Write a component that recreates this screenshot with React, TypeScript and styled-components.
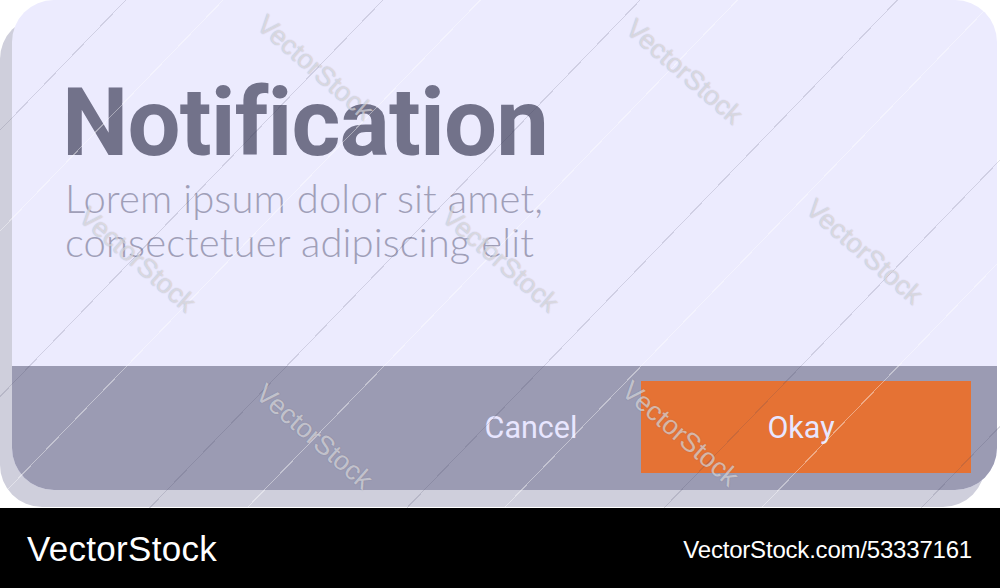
import styled, { createGlobalStyle } from "styled-components";

const GlobalStyle = createGlobalStyle`
    html, body {
        margin: 0;
        padding: 0;
        background: #ffffff;
        overflow: hidden;
    }
    * {
        box-sizing: border-box;
    }
`;

const Page = styled.div`
    width: 1000px;
    height: 588px;
    display: flex;
    flex-direction: column;
    font-family: Roboto, "Liberation Sans", sans-serif;
`;

const Stage = styled.section`
    position: relative;
    height: 508px;
    padding: 0 3px 0 12px;
    background: #ffffff;
    overflow: hidden;
`;

const Card = styled.div`
    height: 490px;
    display: flex;
    flex-direction: column;
    border-radius: 42px;
    overflow: hidden;
    background: #ecebfe;
    box-shadow: -12px 17px 0 #cfcfdc;
`;

const Body = styled.div`
    flex: 1;
    padding: 76px 0 0 50px;
`;

const Title = styled.h1`
    margin: 0 0 6px;
    font-family: Roboto, "Liberation Sans", sans-serif;
    font-weight: 700;
    font-size: 94px;
    line-height: 94px;
    letter-spacing: -0.85px;
    color: #72728a;
`;

const Message = styled.p`
    margin: 0 0 0 3px;
    font-family: Lato, "Open Sans", sans-serif;
    font-weight: 300;
    font-size: 40px;
    line-height: 44px;
    letter-spacing: 0.1px;
    color: #a09fb8;
`;

const Footer = styled.div`
    height: 124px;
    display: flex;
    align-items: stretch;
    justify-content: flex-end;
    padding: 15px 26px 17px 0;
    background: #9b9bb3;
`;

const ActionButton = styled.button<{ $primary?: boolean }>`
    border: none;
    margin: 0;
    padding: ${(p) => (p.$primary ? "0 10px 0 0" : "0")};
    font-family: Roboto, "Liberation Sans", sans-serif;
    font-weight: 400;
    font-size: 30.5px;
    color: #e8e6ff;
    cursor: pointer;
    width: ${(p) => (p.$primary ? "330px" : "220px")};
    background: ${(p) => (p.$primary ? "#e57234" : "transparent")};
`;

const Watermarks = styled.div`
    position: absolute;
    inset: 0;
    pointer-events: none;
    background-image:
        repeating-linear-gradient(
            134deg,
            transparent 0px,
            transparent 90px,
            rgba(60, 60, 90, 0.16) 90px,
            rgba(60, 60, 90, 0.16) 91px,
            transparent 91px,
            transparent 160px,
            rgba(255, 255, 255, 0.4) 160px,
            rgba(255, 255, 255, 0.4) 161px,
            transparent 161px,
            transparent 185px
        );
`;

const MarkText = styled.span`
    position: absolute;
    font-family: "Liberation Sans", Arial, sans-serif;
    font-size: 27px;
    color: rgba(255, 255, 255, 0.55);
    text-shadow: 0 0 1px rgba(80, 80, 100, 0.45);
    transform: translate(-50%, -50%) rotate(41deg);
    white-space: nowrap;
`;

const BottomBar = styled.footer`
    height: 80px;
    background: #000000;
    display: flex;
    align-items: center;
    justify-content: space-between;
    padding: 0 28px 0 27px;
    color: #ffffff;
    font-family: "Liberation Sans", Arial, sans-serif;
`;

const Brand = styled.span`
    font-size: 35px;
    letter-spacing: 0.3px;
    margin-top: 2px;
`;

const ImageId = styled.span`
    font-size: 24px;
    letter-spacing: -0.2px;
    margin-top: 4px;
`;

const marks = [
    { x: 315, y: 68 },
    { x: 684, y: 72 },
    { x: 864, y: 252 },
    { x: 137, y: 260 },
    { x: 500, y: 260 },
    { x: 314, y: 437 },
    { x: 680, y: 434 },
];

export default function App() {
    return (
        <Page>
            <GlobalStyle />
            <Stage>
                <Card>
                    <Body>
                        <Title>Notification</Title>
                        <Message>
                            Lorem ipsum dolor sit amet,
                            <br />
                            consectetuer adipiscing elit
                        </Message>
                    </Body>
                    <Footer>
                        <ActionButton>Cancel</ActionButton>
                        <ActionButton $primary>Okay</ActionButton>
                    </Footer>
                </Card>
                <Watermarks>
                    {marks.map((m, i) => (
                        <MarkText key={i} style={{ left: m.x, top: m.y }}>
                            VectorStock
                        </MarkText>
                    ))}
                </Watermarks>
            </Stage>
            <BottomBar>
                <Brand>VectorStock</Brand>
                <ImageId>VectorStock.com/53337161</ImageId>
            </BottomBar>
        </Page>
    );
}
